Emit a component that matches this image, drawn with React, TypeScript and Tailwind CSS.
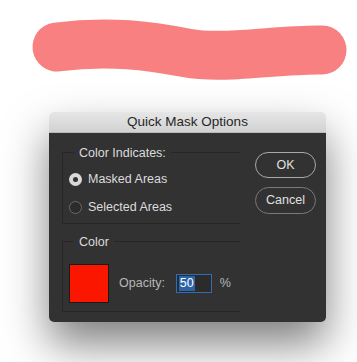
import React from "react";

function Radio({ checked, label }: { checked: boolean; label: string }) {
  return (
    <div className="flex h-[20px] items-center gap-[6px]">
      {checked ? (
        <span className="grid h-[13px] w-[13px] place-items-center rounded-full bg-[#d9d9d9]">
          <span className="h-[5px] w-[5px] rounded-full bg-[#333333]" />
        </span>
      ) : (
        <span className="h-[13px] w-[13px] rounded-full border border-[#6a6a6a] bg-[#2c2c2c]" />
      )}
      <span className="text-[12.5px] text-[#dcdcdc]">{label}</span>
    </div>
  );
}

function GroupLabel({ children }: { children: React.ReactNode }) {
  return (
    <span className="-mt-[8px] ml-[11px] block w-fit bg-[#323232] px-[5px] text-[12.5px] leading-[16px] text-[#dcdcdc]">
      {children}
    </span>
  );
}

export default function App() {
  return (
    <div
      className="h-[362px] w-[357px] overflow-hidden bg-white"
      style={{ fontFamily: '"Liberation Sans", Arial, sans-serif' }}
    >
      <svg width="357" height="112" viewBox="0 0 357 112" className="block">
        <path
          d="M57 47 C 110 40, 150 46, 187 53 S 280 49, 322 50"
          fill="none"
          stroke="#f88080"
          strokeWidth="49"
          strokeLinecap="round"
        />
      </svg>

      <div className="ml-[49px] w-[277px] overflow-hidden rounded-[5px] shadow-[0_22px_44px_rgba(0,0,0,0.5)]">
        <div className="flex h-[21px] items-center justify-center border-b border-[#b9b9b9] bg-gradient-to-b from-[#e6e6e6] to-[#d2d2d2] text-[13.5px] text-[#262626]">
          Quick Mask Options
        </div>

        <div className="flex h-[189px] bg-[#323232] pl-[13px] pr-[10px]">
          <div className="w-[178px]">
            <div className="mt-[19px] h-[72px] border-b border-l border-t border-[#262626]">
              <GroupLabel>Color Indicates:</GroupLabel>
              <div className="mt-[8px] flex flex-col gap-[8px] pl-[6px]">
                <Radio checked label="Masked Areas" />
                <Radio checked={false} label="Selected Areas" />
              </div>
            </div>

            <div className="mt-[17px] h-[71px] border-b border-l border-t border-[#262626]">
              <GroupLabel>Color</GroupLabel>
              <div className="mt-[14px] flex items-center pl-[6px]">
                <div className="h-[39px] w-[40px] border border-[#1a1a1a] bg-[#fb1600]" />
                <span className="ml-[10px] text-[12.5px] text-[#b8b8b8]">Opacity:</span>
                <div className="ml-[11px] flex h-[19px] w-[36px] items-center border border-[#2f6db5] bg-[#2b2b2b] pl-[2px]">
                  <span className="bg-[#2c64a8] px-[1px] text-[12.5px] leading-[15px] text-white">50</span>
                </div>
                <span className="ml-[8px] text-[12.5px] text-[#b8b8b8]">%</span>
              </div>
            </div>
          </div>

          <div className="ml-[15px] mt-[19px] flex flex-col gap-[9px]">
            <button className="h-[26px] w-[61px] rounded-full border border-[#a8a8a8] text-[12.5px] text-[#e0e0e0]">
              OK
            </button>
            <button className="h-[27px] w-[61px] rounded-full border border-[#7a7a7a] text-[12.5px] text-[#e0e0e0]">
              Cancel
            </button>
          </div>
        </div>
      </div>
    </div>
  );
}
